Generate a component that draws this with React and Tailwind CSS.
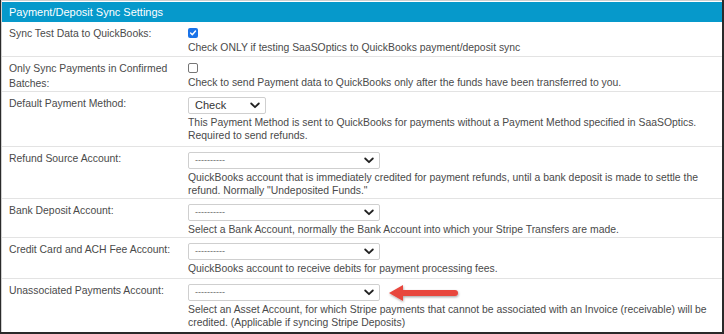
import React from "react";

const font = { fontFamily: '"Liberation Sans", Arial, Helvetica, sans-serif' };

function Chevron() {
  return (
    <svg width="10" height="7" viewBox="0 0 10 7" className="shrink-0">
      <path d="M1.2 1.5 L5 5.2 L8.8 1.5" fill="none" stroke="#222" strokeWidth="1.8" strokeLinecap="round" strokeLinejoin="round" />
    </svg>
  );
}

function Select({ value, w }) {
  return (
    <div className={`${w} h-[17px] flex items-center justify-between border border-[#cfcfcf] rounded-[2px] bg-white pl-[6px] pr-[5px]`}>
      <span className={value === "Check" ? "text-[11px] text-[#333] leading-none" : "text-[9px] text-[#666] leading-none"}>{value}</span>
      <Chevron />
    </div>
  );
}

function CheckBox({ checked }) {
  return checked ? (
    <div className="w-[10px] h-[10px] rounded-[2px] bg-[#1a73e8] flex items-center justify-center">
      <svg width="8" height="8" viewBox="0 0 8 8">
        <path d="M1.6 4.1 L3.3 5.8 L6.5 2" fill="none" stroke="white" strokeWidth="1.4" strokeLinecap="round" strokeLinejoin="round" />
      </svg>
    </div>
  ) : (
    <div className="w-[10px] h-[10px] rounded-[2px] border border-[#767676] bg-white" />
  );
}

function Row({ label, control, desc, h, last, top = "pt-[5px]", children }) {
  return (
    <div className={`flex ${h} ${last ? "" : "border-b border-[#e3e3e3]"} relative`}>
      <div className="w-[186px] pl-[7px] pt-[4px] text-[10.4px] leading-[15px] text-[#4a4a4a]">{label}</div>
      <div className={`flex-1 flex flex-col ${top}`}>
        <div className="h-[15px] flex items-start">{control}</div>
        <div className="text-[10.4px] leading-[13px] text-[#4a4a4a] pr-[8px]">{desc}</div>
      </div>
      {children}
    </div>
  );
}

export default function App() {
  return (
    <div style={font} className="w-[724px] h-[334px] bg-white border-l border-r-2 border-b-2 border-[#2a2a2a] overflow-hidden">
      <div className="border-t border-l border-[#cfcfcf] h-full flex flex-col">
        <div className="h-[20px] bg-[#0699cb] flex items-center pl-[7px] text-white text-[11px] mt-[1px]">
          Payment/Deposit Sync Settings
        </div>
        <Row h="h-[35px]" top="pt-[4px]" label="Sync Test Data to QuickBooks:" control={<div className="pt-[2px]"><CheckBox checked /></div>} desc="Check ONLY if testing SaaSOptics to QuickBooks payment/deposit sync" />
        <Row h="h-[35px]" top="pt-[4px]" label={<>Only Sync Payments in Confirmed<br />Batches:</>} control={<div className="pt-[2px]"><CheckBox /></div>} desc="Check to send Payment data to QuickBooks only after the funds have been transferred to you." />
        <Row h="h-[55px]" label="Default Payment Method:" control={<Select value="Check" w="w-[78px]" />} desc={<><div className="pt-[4px]">This Payment Method is sent to QuickBooks for payments without a Payment Method specified in SaaSOptics.</div><div>Required to send refunds.</div></>} />
        <Row h="h-[52px]" label="Refund Source Account:" control={<Select value="----------" w="w-[192px]" />} desc={<div className="pt-[4px]">QuickBooks account that is immediately credited for payment refunds, until a bank deposit is made to settle the refund. Normally "Undeposited Funds."</div>} />
        <Row h="h-[39px]" label="Bank Deposit Account:" control={<Select value="----------" w="w-[192px]" />} desc={<div className="pt-[4px]">Select a Bank Account, normally the Bank Account into which your Stripe Transfers are made.</div>} />
        <Row h="h-[41px]" label="Credit Card and ACH Fee Account:" control={<Select value="----------" w="w-[192px]" />} desc={<div className="pt-[4px]">QuickBooks account to receive debits for payment processing fees.</div>} />
        <Row last h="flex-1" label="Unassociated Payments Account:" control={<Select value="----------" w="w-[192px]" />} desc={<div className="pt-[4px]">Select an Asset Account, for which Stripe payments that cannot be associated with an Invoice (receivable) will be credited. (Applicable if syncing Stripe Deposits)</div>}>
          <svg className="absolute left-[384px] top-[3px]" width="76" height="24" viewBox="0 0 76 24">
            <defs>
              <filter id="sh" x="-20%" y="-50%" width="140%" height="200%">
                <feDropShadow dx="0.5" dy="1.2" stdDeviation="1" floodColor="#000" floodOpacity="0.35" />
              </filter>
            </defs>
            <path d="M3 11 L17 3 L17 8 L69 8 Q72 8 72 11 Q72 14 69 14 L17 14 L17 19 Z" fill="#e8463e" filter="url(#sh)" strokeLinejoin="round" />
          </svg>
        </Row>
      </div>
    </div>
  );
}
